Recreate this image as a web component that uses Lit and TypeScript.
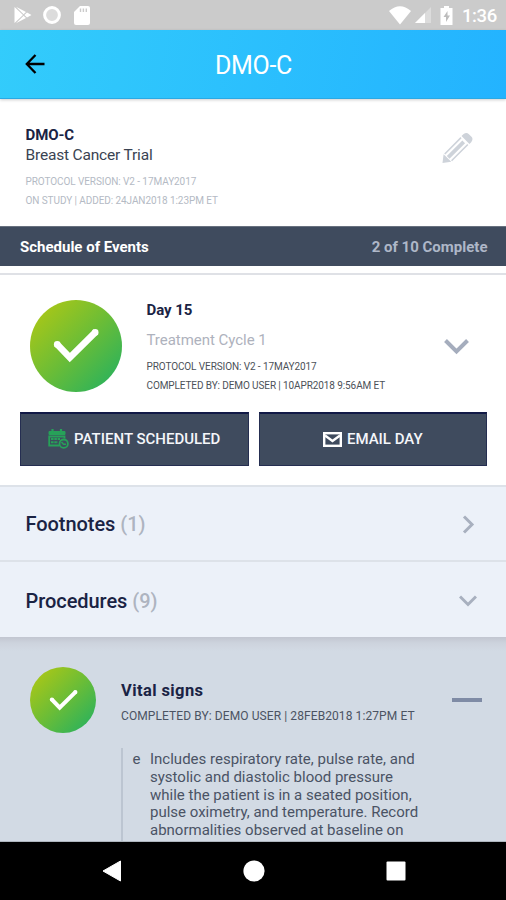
import { LitElement, html, css } from "lit";
import { customElement } from "lit/decorators.js";

@customElement("check-badge")
class CheckBadge extends LitElement {
  static styles = css`
    :host { display: flex; align-items: center; justify-content: center; border-radius: 50%; background: linear-gradient(135deg, #b0c814 5%, #6cbd36 50%, #20b062 98%); }
    svg { display: block; width: var(--tick-size, 100%); height: var(--tick-size, 100%); }
  `;
  render() {
    return html`<svg viewBox="0 0 92 92" fill="none" stroke="#fff" stroke-width="6.6" stroke-linejoin="miter">
      <path d="M26.6 43.8 39.8 57.6 66 31.6" />
      <circle cx="27.2" cy="44.4" r="3.3" fill="#fff" stroke="none" />
      <circle cx="65.2" cy="32.4" r="3.3" fill="#fff" stroke="none" />
    </svg>`;
  }
}

@customElement("app-root")
class AppRoot extends LitElement {
  static styles = css`
    :host { display: block; width: 506px; height: 900px; overflow: hidden; font-family: Roboto, "Liberation Sans", sans-serif; background: #fff; color: #1a2344; }
    * { box-sizing: border-box; }
    .screen { display: flex; flex-direction: column; height: 900px; white-space: nowrap; }
    .screen > * { flex: none; }
    svg { display: block; flex: none; }
    .status { height: 30px; background: #cbcbcb; display: flex; align-items: center; padding: 0 9px 0 14px; color: #fff; }
    .ring { margin-left: 9px; }
    .card { margin-left: 12px; }
    .signal { margin-left: 2px; }
    .battery { margin: 0 9px 0 8px; }
    .clock { font-size: 18.5px; font-weight: 500; line-height: 30px; padding-top: 2px; width: 35px; letter-spacing: -0.4px; }
    .spacer { flex: 1; }
    .header { height: 69px; background: linear-gradient(100deg, #33ccfb, #23b3ff); display: grid; grid-template-columns: 90px 1fr 90px; align-items: center; color: #fff; border-bottom: 1px solid #2aa9e4; box-shadow: 0 1px 3px rgba(0,0,0,.2); z-index: 1; }
    .back { margin-left: 25px; }
    .title { text-align: center; font-size: 25px; line-height: 30px; padding: 3px 0 0 1px; letter-spacing: -0.3px; }
    .info { height: 127px; padding: 26px 33px 0 25.5px; display: flex; justify-content: space-between; }
    .name { font-size: 15px; font-weight: 700; line-height: 20px; letter-spacing: -0.1px; }
    .trial { font-size: 15.5px; line-height: 21px; color: #3a4352; letter-spacing: -0.18px; }
    .meta { font-size: 10px; line-height: 19px; color: #b4bac4; letter-spacing: -0.08px; }
    .trial + .meta { margin-top: 6px; }
    .pencil { margin-top: 7px; }
    .band { height: 40px; background: #3f4b5e; border-top: 1px solid #68717f; display: flex; justify-content: space-between; align-items: center; padding: 1px 18.5px 0 20px; font-weight: 700; font-size: 15px; color: #fff; }
    .count { color: #aeb7c8; }
    .day { margin-top: 7px; height: 212px; border-top: 2px solid #dfe1e6; }
    .dayhead { display: flex; height: 136.5px; padding-left: 30px; }
    .dayhead check-badge { width: 92px; height: 92px; margin-top: 24.5px; }
    .daytext { margin-left: 24.5px; padding-top: 25px; flex: 1; }
    .daytitle { font-size: 15px; font-weight: 700; line-height: 20px; letter-spacing: -0.05px; }
    .cycle { font-size: 15px; line-height: 20px; margin-top: 10px; color: #aeb2bd; letter-spacing: -0.03px; }
    .daytext .meta { color: #4c5158; letter-spacing: -0.1px; }
    .cycle + .meta { margin-top: 7px; }
    .daychev { margin: 64px 37px 0 0; }
    .actions { display: flex; gap: 10px; padding: 0 19px 0 20px; }
    .btn { flex: 1; height: 54px; background: #3f4b5e; border: 1px solid #252e51; border-top: 2px solid #111946; color: #f4f6fa; font-size: 15px; font-weight: 500; display: flex; align-items: center; justify-content: center; gap: 5px; }
    .row { border-top: 2px solid #dde2e9; background: #ecf1f9; display: flex; justify-content: space-between; align-items: center; padding: 1px 30px 0 25.5px; font-size: 20px; font-weight: 500; letter-spacing: -0.06px; }
    .foot { height: 75px; }
    .proc { height: 77px; padding-top: 2px; padding-right: 29px; }
    .num { color: #aeb4c0; margin-left: 5px; }
    .vital { height: 205px; background: linear-gradient(#c2c6d1, #cdd3dd 6px, #d2dae4 14px); overflow: hidden; border-bottom: 1px solid #aeb6be; }
    .vhead { display: flex; height: 112px; padding-left: 30px; }
    .vhead check-badge { width: 66px; height: 66px; margin-top: 30px; --tick-size: 57px; }
    .vtext { margin-left: 25px; padding-top: 43px; flex: 1; }
    .vtitle { font-size: 16.5px; font-weight: 700; line-height: 22px; letter-spacing: 0.4px; }
    .vmeta { font-size: 12px; line-height: 18px; margin-top: 4.5px; color: #4b5362; letter-spacing: 0.09px; }
    .minus { width: 30px; height: 4px; background: #7f8ba5; margin: 61px 24px 0 0; }
    .note { margin-left: 120.5px; margin-top: -1px; border-left: 2px solid #bcc5d1; padding: 3px 0 0 10px; display: flex; font-size: 15px; line-height: 17.8px; color: #4a5364; height: 110px; }
    .mark { width: 17.5px; }
    .line { display: block; }
    .nav { height: 58px; background: #000; display: flex; padding: 18px 0 0 101.5px; }
    .nav svg + svg { margin-left: 121px; }
  `;
  render() {
    return html`<div class="screen">
      <div class="status">
        <svg width="19" height="18" viewBox="0 0 19 18"><path d="M.5 1v16L9 9z M2 .8 12 6 9.6 8.3z M2 17.2 12 12 9.6 9.7z M13 6.5 17.5 9 13 11.5 10.4 9z" fill="#fff" /></svg>
        <svg class="ring" width="20" height="20" viewBox="0 0 20 20"><circle cx="10" cy="10" r="7.4" fill="#dcdcdc" stroke="#fff" stroke-width="3" /></svg>
        <svg class="card" width="16" height="19" viewBox="0 0 16 19"><path d="M6 0H14q2 0 2 2V17q0 2-2 2H2Q0 19 0 17V6z" fill="#fff" /><path d="M6.5 2.5v3.5M9.4 2.5v3.500M12.3 2.5v3.5" stroke="#cbcbcb" stroke-width="1.4" /></svg>
        <span class="spacer"></span>
        <svg width="23" height="19" viewBox="0 0 23 19"><path d="M0 5Q11-4.5 22 5L11 18.5z" fill="#fff" /></svg>
        <svg class="signal" width="18" height="18" viewBox="0 0 18 18"><path d="M17 1V17H1z" fill="#dcdcdc" /><path d="M11 7V17H1z" fill="#fff" /></svg>
        <svg class="battery" width="13" height="19" viewBox="0 0 13 19"><path d="M4 0H9V2H12.5V19H.5V2H4z" fill="#fff" /><path d="M7.5 5 3.5 11H6V16L10 9.5H7.5z" fill="#bdbdbd" /></svg>
        <span class="clock">1:36</span>
      </div>
      <div class="header">
        <svg class="back" width="22" height="20" viewBox="0 0 22 20" fill="none" stroke="#000" stroke-width="2.3"><path d="M10.5 1 1.8 10l8.7 9M2 10H19.5" /></svg>
        <div class="title">DMO-C</div>
      </div>
      <div class="info">
        <div>
          <div class="name">DMO-C</div>
          <div class="trial">Breast Cancer Trial</div>
          <div class="meta">PROTOCOL VERSION: V2 - 17MAY2017</div>
          <div class="meta">ON STUDY | ADDED: 24JAN2018 1:23PM ET</div>
        </div>
        <svg class="pencil" width="32" height="32" viewBox="0 0 32 32"><g transform="translate(1.5 31) rotate(-45)" fill="#ced3da"><path d="M0 0 7-5.4V5.4z" /><path d="M8-5.6H31V-4H8zM8-1.9H30V1.9H8zM8 4H31V5.6H8zM32.5-5.6H35Q39-5 39-2V2Q39 5 35 5.6H32.5z" /></g></svg>
      </div>
      <div class="band"><span>Schedule of Events</span><span class="count">2 of 10 Complete</span></div>
      <div class="day">
        <div class="dayhead">
          <check-badge></check-badge>
          <div class="daytext">
            <div class="daytitle">Day 15</div>
            <div class="cycle">Treatment Cycle 1</div>
            <div class="meta">PROTOCOL VERSION: V2 - 17MAY2017</div>
            <div class="meta">COMPLETED BY: DEMO USER | 10APR2018 9:56AM ET</div>
          </div>
          <svg class="daychev" width="25" height="16" viewBox="0 0 25 16" fill="none" stroke="#a5adbd" stroke-width="4"><path d="M1.5 1.5 12.5 12.5 23.5 1.5" /></svg>
        </div>
        <div class="actions">
          <div class="btn">
            <svg width="21" height="20" viewBox="0 0 21 20" fill="none" stroke="#27a159">
              <path d="M1 2.5H17V5.5H1z" fill="#27a159" /><path d="M4.5 0V4M13 0V4" stroke-width="2.2" />
              <path d="M11 16.5H1.2V7.5H16.500V9.500" stroke-width="1.8" />
              <path d="M3 10H12M3 13.300H10" stroke-width="2" stroke-dasharray="2.6 .7" />
              <circle cx="15.7" cy="14.7" r="4.2" stroke-width="1.8" /><path d="M13.5 13 15.5 15.2H18" stroke-width="1.5" />
            </svg>
            <span>PATIENT SCHEDULED</span>
          </div>
          <div class="btn">
            <svg width="19" height="15" viewBox="0 0 19 15" fill="none" stroke="#fff"><rect x="1.2" y="1.2" width="16.6" height="12.6" stroke-width="2.4" /><path d="M2 3.5 9.5 9 17 3.5" stroke-width="2.4" /></svg>
            <span>EMAIL DAY</span>
          </div>
        </div>
      </div>
      <div class="row foot"><span>Footnotes<span class="num">(1)</span></span>
        <svg width="14" height="19" viewBox="0 0 14 19" fill="none" stroke="#a8b0bf" stroke-width="3"><path d="M2 1.5 10 9.5 2 17.5" /></svg></div>
      <div class="row proc"><span>Procedures<span class="num">(9)</span></span>
        <svg width="18" height="12" viewBox="0 0 18 12" fill="none" stroke="#a8b0bf" stroke-width="3"><path d="M1 1.5 9 9.5 17 1.5" /></svg></div>
      <div class="vital">
        <div class="vhead">
          <check-badge></check-badge>
          <div class="vtext">
            <div class="vtitle">Vital signs</div>
            <div class="vmeta">COMPLETED BY: DEMO USER | 28FEB2018 1:27PM ET</div>
          </div>
          <div class="minus"></div>
        </div>
        <div class="note">
          <span class="mark">e</span>
          <div>
            <span class="line">Includes respiratory rate, pulse rate, and</span>
            <span class="line">systolic and diastolic blood pressure</span>
            <span class="line">while the patient is in a seated position,</span>
            <span class="line">pulse oximetry, and temperature. Record</span>
            <span class="line">abnormalities observed at baseline on</span>
          </div>
        </div>
      </div>
      <div class="nav">
        <svg width="20" height="22" viewBox="0 0 20 22"><path d="M1 11 18.5 1V21z" fill="#fff" stroke="#fff" /></svg>
        <svg width="22" height="22" viewBox="0 0 22 22"><circle cx="11" cy="11" r="10.6" fill="#fff" /></svg>
        <svg width="20" height="22" viewBox="0 0 20 22"><rect x=".5" y="1.5" width="19" height="19" rx="1" fill="#fff" /></svg>
      </div>
    </div>`;
  }
}
